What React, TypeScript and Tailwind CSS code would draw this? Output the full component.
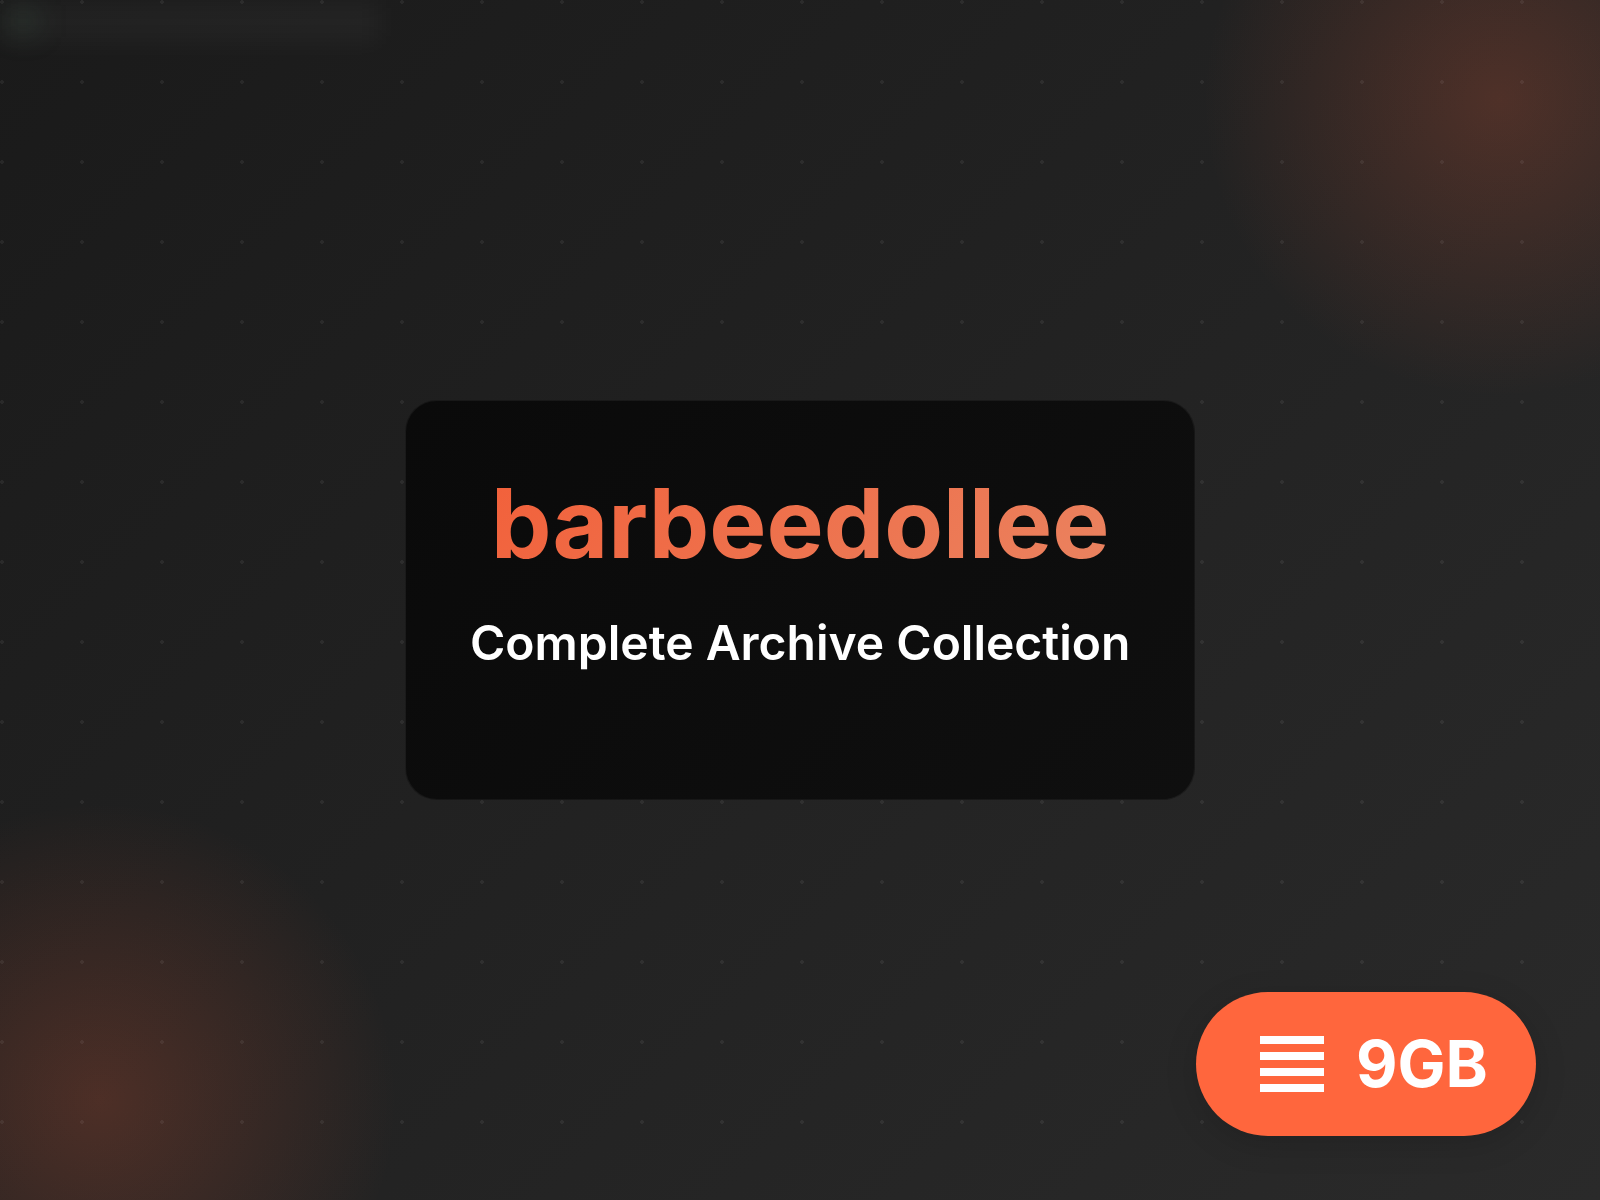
export default function App() {
  return (
    <div className="relative flex h-screen w-full items-center justify-center overflow-hidden bg-[linear-gradient(135deg,#1a1a1a_0%,#2a2a2a_100%)] font-['Inter',sans-serif]">
      {/* glows and dot grid */}
      <div className="absolute right-[-200px] top-[-200px] h-[600px] w-[600px] rounded-full bg-[radial-gradient(circle,rgba(255,102,61,0.2)_0%,transparent_70%)]" />
      <div className="absolute bottom-[-200px] left-[-200px] h-[600px] w-[600px] rounded-full bg-[radial-gradient(circle,rgba(255,102,61,0.2)_0%,transparent_70%)]" />
      <div className="absolute inset-0 bg-[radial-gradient(circle_at_2px_2px,rgba(255,255,255,0.06)_2px,transparent_0)] bg-[size:80px_80px]" />
      <div className="absolute left-0 top-0 h-[44px] w-[380px] bg-white/[0.03] blur-md" />
      <div className="absolute left-[5px] top-[5px] h-[32px] w-[36px] bg-[#4a6a58]/15 blur-md" />

      <div className="relative flex h-[400px] flex-col items-center rounded-[32px] border border-white/5 bg-[linear-gradient(135deg,#0a0a0a,#0f0f0f)] px-16 pt-16 will-change-transform">
        <h1 className="bg-[linear-gradient(135deg,#f2603a,#ea8360)] bg-clip-text text-[96px] font-bold leading-[116px] text-transparent">
          barbeedollee
        </h1>
        <p className="mt-8 text-[48px] font-semibold leading-tight text-white">
          Complete Archive Collection
        </p>
      </div>

      <div className="absolute bottom-16 right-16 flex items-center gap-8 rounded-full bg-[#ff663d] py-8 pl-16 pr-12 shadow-[0_8px_32px_rgba(0,0,0,0.15)] will-change-transform">
        <div className="flex w-16 flex-col gap-2">
          <div className="h-2 bg-white" />
          <div className="h-2 bg-white" />
          <div className="h-2 bg-white" />
          <div className="h-2 bg-white" />
        </div>
        <span className="text-[64px] font-bold leading-[80px] text-white">9GB</span>
      </div>
    </div>
  )
}
